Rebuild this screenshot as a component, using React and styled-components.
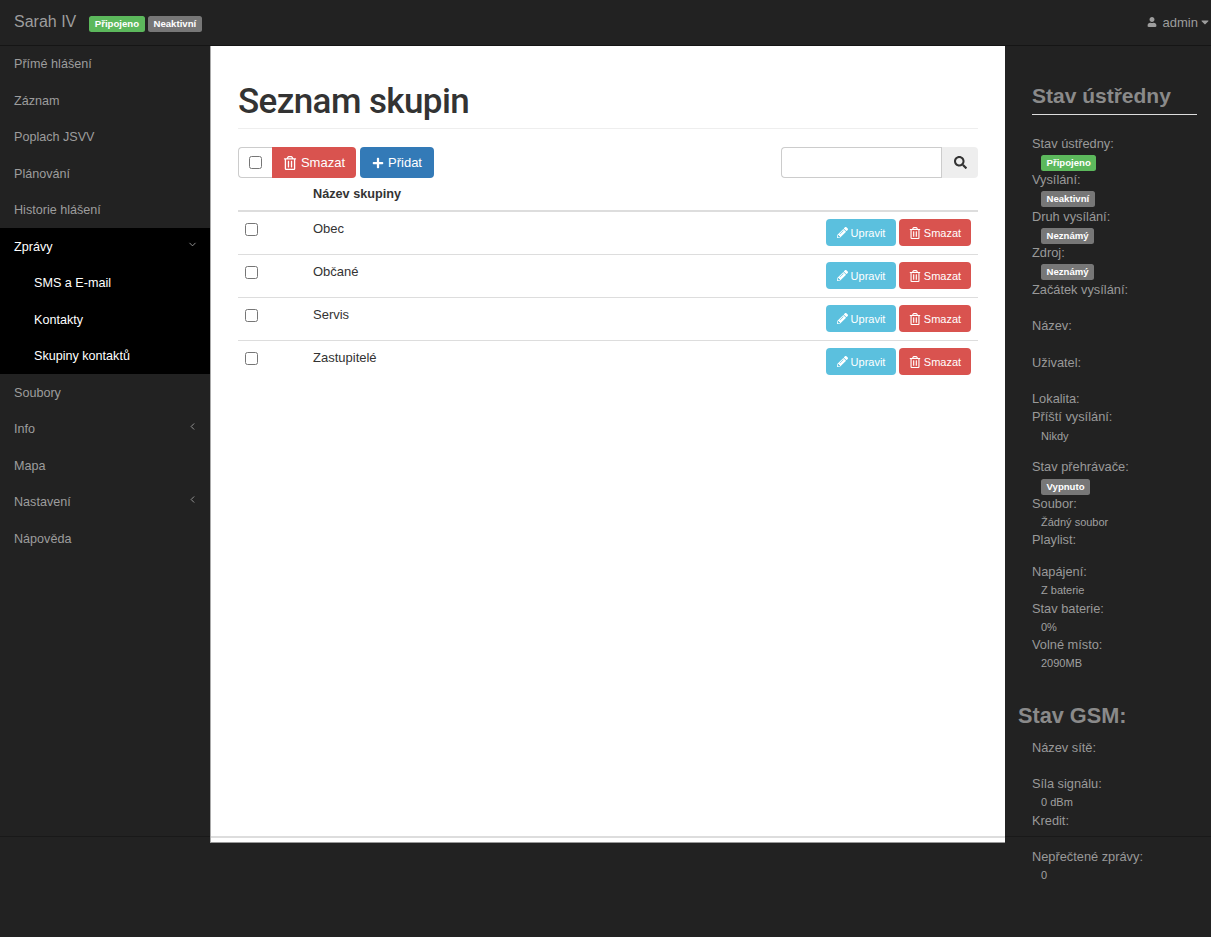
import React from "react";
import styled, { createGlobalStyle } from "styled-components";
import { FaUser, FaRegTrashAlt, FaPlus, FaPencilAlt, FaSearch, FaCaretDown } from "react-icons/fa";
import { ChevronDown, ChevronLeft } from "lucide-react";

const Global = createGlobalStyle`
  html, body { margin: 0; padding: 0; background: #222; }
  body { font-family: "Liberation Sans", Arial, sans-serif; font-size: 13px; color: #333; }
  * { box-sizing: border-box; }
`;

const Page = styled.div`
  position: relative;
  height: 937px;
  overflow: hidden;
  background: #222;
`;
const DarkRule = styled.div`
  position: absolute;
  left: 0; right: 0; top: 836px;
  height: 1px;
  background: #191919;
`;
const Navbar = styled.header`
  position: relative;
  height: 46px;
  display: flex;
  align-items: center;
  padding: 0 0 1px 14px;
  background: #222;
  border-bottom: 1px solid #151515;
`;
const Brand = styled.span`
  font-size: 16px;
  color: #9d9d9d;
  margin-right: 13px;
`;
const Badge = styled.span`
  display: inline-block;
  height: 16px;
  line-height: 16px;
  padding: 0 5.5px;
  border-radius: 2.5px;
  font-size: 9.6px;
  font-weight: 700;
  color: #fff;
  background: ${p => (p.$ok ? "#5cb85c" : "#777")};
`;
const NavBadges = styled.div`
  display: flex;
  gap: 3.5px;
  margin-top: 3px;
`;
const UserMenu = styled.div`
  margin-left: auto;
  display: flex;
  align-items: center;
  gap: 6px;
  color: #9d9d9d;
  font-size: 13px;
  svg { display: block; }
`;
const Caret = styled.span`
  display: flex;
  margin-left: -5px;
`;
const Body = styled.div`
  display: flex;
  align-items: flex-start;
`;
const Sidebar = styled.nav`
  width: 210px;
  flex: none;
  margin-top: -0.75px;
`;
const NavGroup = styled.div`
  background: #000;
`;
const NavItem = styled.div`
  height: 36.5px;
  display: flex;
  align-items: center;
  justify-content: space-between;
  padding: 1px 12px 0 ${p => (p.$sub ? "34px" : "14px")};
  font-size: 12.6px;
  color: ${p => (p.$active ? "#fff" : "#9d9d9d")};
  svg { margin-top: -5px; color: #9d9d9d; }
`;
const Main = styled.main`
  position: relative;
  width: 795px;
  height: 797px;
  flex: none;
  background: #fff;
  border-bottom: 1px solid #999;
  border-left: 1px solid #aaa;
  padding: 31px 27px 0 27px;
  &::after {
    content: "";
    position: absolute;
    left: 0; right: 0; top: 790px;
    height: 2px;
    background: #ddd;
  }
`;
const Title = styled.h1`
  margin: 0 0 18px;
  height: 52px;
  line-height: 50px;
  font-family: Roboto, "Liberation Sans", sans-serif;
  font-size: 35px;
  letter-spacing: -0.6px;
  font-weight: 500;
  color: #333;
  border-bottom: 1px solid #eee;
`;
const Toolbar = styled.div`
  display: flex;
  align-items: stretch;
  height: 31px;
`;
const CheckCell = styled.div`
  width: 34px;
  display: flex;
  align-items: center;
  justify-content: center;
  border: 1px solid #ccc;
  border-right: 0;
  border-radius: 4px 0 0 4px;
`;
const Check = styled.input.attrs({ type: "checkbox" })`
  width: 13px;
  height: 13px;
  margin: 0;
  display: block;
`;
const Button = styled.button`
  display: inline-flex;
  align-items: center;
  justify-content: center;
  gap: ${p => (p.$small ? "3px" : "4px")};
  padding: 0;
  width: ${p => p.$w}px;
  height: ${p => (p.$small ? "27px" : "100%")};
  border: 0;
  background: ${p => p.$bg};
  color: #fff;
  font-family: inherit;
  font-size: ${p => (p.$small ? "11px" : "13px")};
  border-radius: ${p => (p.$flatLeft ? "0 4px 4px 0" : "4px")};
  margin-left: ${p => p.$gap || 0}px;
  svg { display: block; }
`;
const SearchBox = styled.div`
  margin-left: auto;
  display: flex;
  width: 197px;
`;
const SearchInput = styled.input`
  flex: 1;
  min-width: 0;
  border: 1px solid #ccc;
  border-right: 0;
  border-radius: 4px 0 0 4px;
  outline: none;
`;
const SearchButton = styled.div`
  width: 37px;
  display: flex;
  align-items: center;
  justify-content: center;
  background: #eee;
  border-left: 1px solid #ccc;
  border-radius: 0 4px 4px 0;
  color: #333;
  font-size: 13px;
`;
const HeadRow = styled.div`
  display: flex;
  align-items: center;
  height: 34px;
  padding: 0 0 0 75px;
  border-bottom: 2px solid #ddd;
  font-weight: 700;
  font-size: 12.7px;
`;
const Row = styled.div`
  display: flex;
  align-items: flex-start;
  height: 43px;
  padding: 8px 7px 0;
  border-bottom: ${p => (p.$last ? "0" : "1px solid #ddd")};
`;
const RowCheck = styled.div`
  width: 68px;
  padding-top: 3px;
`;
const RowName = styled.div`
  flex: 1;
  line-height: 18px;
  color: #333;
`;
const RowActions = styled.div`
  display: flex;
  gap: 3px;
  margin-top: -1px;
`;
const Aside = styled.aside`
  flex: 1;
  min-width: 0;
  padding: 32px 14px 0 13px;
  color: #9d9d9d;
`;
const Inner = styled.div`
  padding-left: 14px;
`;
const PanelTitle = styled.h2`
  margin: 0 0 19.5px;
  height: 37px;
  line-height: 36px;
  font-size: 21px;
  font-weight: 700;
  color: #8a8a8a;
  border-bottom: 1px solid #ddd;
`;
const GsmTitle = styled.h3`
  margin: 31px 0 11px;
  height: 24px;
  line-height: 24px;
  font-size: 21.7px;
  font-weight: 700;
  color: #8a8a8a;
`;
const Group = styled.dl`
  margin: 0 0 13.5px;
`;
const Label = styled.dt`
  height: 18.25px;
  line-height: 18px;
  font-size: 12.8px;
  color: #999;
`;
const Value = styled.dd`
  margin: 0;
  height: 18.25px;
  padding-left: 9px;
  font-size: 11px;
  line-height: 18px;
  color: #a0a0a0;
`;

const navBefore = ["Přímé hlášení", "Záznam", "Poplach JSVV", "Plánování", "Historie hlášení"];
const navSub = ["SMS a E-mail", "Kontakty", "Skupiny kontaktů"];
const groups = ["Obec", "Občané", "Servis", "Zastupitelé"];

const status = [
  [
    ["Stav ústředny:", <Badge $ok>Připojeno</Badge>],
    ["Vysílání:", <Badge>Neaktivní</Badge>],
    ["Druh vysílání:", <Badge>Neznámý</Badge>],
    ["Zdroj:", <Badge>Neznámý</Badge>],
    ["Začátek vysílání:", "\u00a0"],
    ["Název:", "\u00a0"],
    ["Uživatel:", "\u00a0"],
    ["Lokalita:", null],
    ["Příští vysílání:", "Nikdy"],
  ],
  [
    ["Stav přehrávače:", <Badge>Vypnuto</Badge>],
    ["Soubor:", "Žádný soubor"],
    ["Playlist:", null],
  ],
  [
    ["Napájení:", "Z baterie"],
    ["Stav baterie:", "0%"],
    ["Volné místo:", "2090MB"],
  ],
];
const gsm = [
  ["Název sítě:", "\u00a0"],
  ["Síla signálu:", "0 dBm"],
  ["Kredit:", "\u00a0"],
  ["Nepřečtené zprávy:", "0"],
];

const Pairs = ({ items }) => (
  <Group>
    {items.map(([k, v]) => (
      <React.Fragment key={k}>
        <Label>{k}</Label>
        {v !== null && <Value>{v}</Value>}
      </React.Fragment>
    ))}
  </Group>
);

export default function App() {
  return (
    <Page>
      <Global />
      <DarkRule />
      <Navbar>
        <Brand>Sarah IV</Brand>
        <NavBadges>
          <Badge $ok>Připojeno</Badge>
          <Badge>Neaktivní</Badge>
        </NavBadges>
        <UserMenu>
          <FaUser size={10} />
          <span>admin</span>
          <Caret><FaCaretDown size={12} /></Caret>
        </UserMenu>
      </Navbar>
      <Body>
        <Sidebar>
          {navBefore.map(n => <NavItem key={n}>{n}</NavItem>)}
          <NavGroup>
            <NavItem $active>Zprávy<ChevronDown size={11} /></NavItem>
            {navSub.map(n => <NavItem key={n} $sub $active>{n}</NavItem>)}
          </NavGroup>
          <NavItem>Soubory</NavItem>
          <NavItem>Info<ChevronLeft size={11} /></NavItem>
          <NavItem>Mapa</NavItem>
          <NavItem>Nastavení<ChevronLeft size={11} /></NavItem>
          <NavItem>Nápověda</NavItem>
        </Sidebar>
        <Main>
          <Title>Seznam skupin</Title>
          <Toolbar>
            <CheckCell><Check /></CheckCell>
            <Button $flatLeft $w={84} $bg="#d9534f"><FaRegTrashAlt size={14} />Smazat</Button>
            <Button $gap={4} $w={74} $bg="#337ab7"><FaPlus size={12} />Přidat</Button>
            <SearchBox>
              <SearchInput />
              <SearchButton><FaSearch /></SearchButton>
            </SearchBox>
          </Toolbar>
          <HeadRow>Název skupiny</HeadRow>
          {groups.map((g, i) => (
            <Row key={g} $last={i === groups.length - 1}>
              <RowCheck><Check /></RowCheck>
              <RowName>{g}</RowName>
              <RowActions>
                <Button $small $w={70} $bg="#5bc0de"><FaPencilAlt size={11} />Upravit</Button>
                <Button $small $w={72} $bg="#d9534f"><FaRegTrashAlt size={12} />Smazat</Button>
              </RowActions>
            </Row>
          ))}
        </Main>
        <Aside>
          <Inner>
            <PanelTitle>Stav ústředny</PanelTitle>
            {status.map((s, i) => <Pairs key={i} items={s} />)}
          </Inner>
          <GsmTitle>Stav GSM:</GsmTitle>
          <Inner>
            <Pairs items={gsm} />
          </Inner>
        </Aside>
      </Body>
    </Page>
  );
}
